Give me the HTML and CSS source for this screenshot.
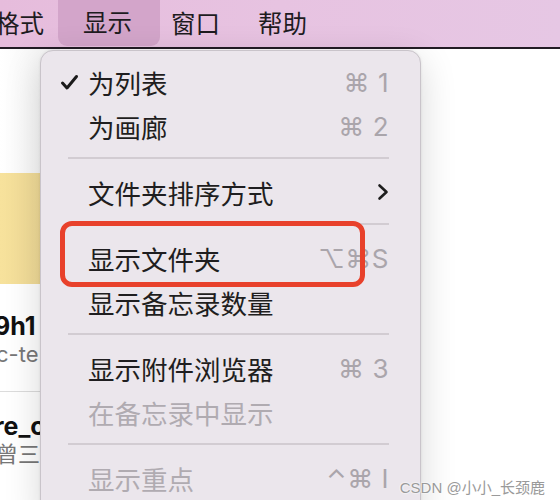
FILE: index.html
```html
<!DOCTYPE html>
<html lang="zh-CN">
<head>
    <meta charset="UTF-8">
    <meta name="viewport" content="width=device-width, initial-scale=1.0">
    <title>显示菜单</title>
    <link rel="stylesheet" href="styles.css">
</head>
<body>
    <div class="menubar">
        <span class="bar-item cut">格式</span>
        <span class="bar-item active">显示</span>
        <span class="bar-item">窗口</span>
        <span class="bar-item">帮助</span>
    </div>
    <div class="window">
        <div class="notes">
            <div class="note-top"></div>
            <div class="note-current"></div>
            <div class="note">
                <div class="note-title">9h1</div>
                <div class="note-sub">c-te</div>
            </div>
            <div class="note">
                <div class="note-title">re_c</div>
                <div class="note-sub">曾三.</div>
            </div>
        </div>
        <div class="editor"></div>

        <div class="menu">
            <div class="menu-item">
                <span class="check"><svg width="19" height="17" viewBox="0 0 19 17"><path d="M2.5 9 L7 14 L16.5 2.5" fill="none" stroke="#1b1b1b" stroke-width="3" stroke-linecap="round" stroke-linejoin="round"/></svg></span>
                <span class="label">为列表</span><span class="keys">⌘ 1</span>
            </div>
            <div class="menu-item"><span class="check"></span><span class="label">为画廊</span><span class="keys">⌘ 2</span></div>
            <div class="sep"></div>
            <div class="menu-item"><span class="check"></span><span class="label">文件夹排序方式</span>
                <svg class="chevron" width="12" height="18" viewBox="0 0 12 18"><path d="M2.5 2.5 L9.5 9 L2.5 15.5" fill="none" stroke="#1e1e1e" stroke-width="2.6" stroke-linecap="round" stroke-linejoin="round"/></svg>
            </div>
            <div class="sep"></div>
            <div class="menu-item"><span class="check"></span><span class="label">显示文件夹</span><span class="keys">⌥⌘S</span></div>
            <div class="menu-item"><span class="check"></span><span class="label">显示备忘录数量</span></div>
            <div class="sep"></div>
            <div class="menu-item"><span class="check"></span><span class="label">显示附件浏览器</span><span class="keys">⌘ 3</span></div>
            <div class="menu-item disabled"><span class="check"></span><span class="label">在备忘录中显示</span></div>
            <div class="sep"></div>
            <div class="menu-item disabled"><span class="check"></span><span class="label">显示重点</span><span class="keys">⌃⌘ I</span></div>

            <div class="mark"></div>
        </div>

        <div class="watermark">CSDN @小小_长颈鹿</div>
    </div>
</body>
</html>
```

FILE: styles.css
```css
* {
    box-sizing: border-box;
}
html, body {
    margin: 0;
    padding: 0;
    width: 560px;
    height: 500px;
    overflow: hidden;
    background: #fff;
    font-family: "Noto Sans CJK SC", "Noto Sans", sans-serif;
}

/* 顶部菜单栏 */
.menubar {
    height: 49px;
    display: flex;
    align-items: stretch;
    background: linear-gradient(90deg, #e6bcdc 0%, #e7c3e1 50%, #e6c7e4 100%);
    border-bottom: 2px solid #221c24;
    font-size: 24.5px;
    color: #1e1c1f;
}
.bar-item {
    display: flex;
    align-items: center;
    padding: 0 19px 3px;
}
.bar-item.cut {
    margin-left: -5px;
    padding-left: 0;
}
.bar-item.active {
    background: #d3a5ca;
    border-radius: 0 0 9px 9px;
    padding: 0 28px 3px 25px;
    margin: 0 -8px 1px -5px;
}

/* 背后的窗口 */
.window {
    position: relative;
    height: 451px;
    display: flex;
}
.notes {
    width: 60px;
    display: flex;
    flex-direction: column;
}
.note-top {
    height: 124px;
    background: linear-gradient(90deg, #fff 0%, #f3f3f3 100%);
}
.note-current {
    height: 111px;
    background: linear-gradient(90deg, #f7e29c 0%, #f2dc98 60%, #e6d193 100%);
}
.note {
    height: 108px;
    padding: 28px 0 0 0;
    white-space: nowrap;
    overflow: hidden;
    border-bottom: 1px solid #dcdcdc;
    margin-right: -20px;
}
.note + .note {
    border-bottom: none;
    padding-top: 20px;
}
.note-title {
    font-family: "Inter", "Noto Sans CJK SC", sans-serif;
    font-weight: 700;
    font-size: 25px;
    line-height: 28px;
    color: #111;
    margin-left: -6px;
}
.note-sub {
    font-family: "Inter", "Noto Sans CJK SC", sans-serif;
    font-size: 22px;
    line-height: 28px;
    color: #777;
    margin-left: -4px;
}
.editor {
    flex: 1;
    background: #fff;
}

/* 下拉菜单 */
.menu {
    position: absolute;
    left: 40px;
    top: 1px;
    width: 381px;
    height: 470px;
    padding: 9px 31px 0 19px;
    background: #ebe6ec;
    border: 1px solid #c9c4ca;
    border-radius: 13px;
    box-shadow: 0 10px 36px rgba(0, 0, 0, 0.16), 0 0 3px rgba(0, 0, 0, 0.08);
}
.menu-item {
    height: 44px;
    display: flex;
    align-items: center;
    font-size: 26.5px;
    color: #1f1e20;
}
.menu-item.disabled {
    color: #b0abb1;
}
.check {
    width: 28px;
    display: flex;
    align-items: center;
}
.label {
    flex: 1;
}
.keys {
    font-family: "Inter", "DejaVu Sans", sans-serif;
    font-size: 26px;
    color: #aaa5ab;
    letter-spacing: 0.5px;
}
.chevron {
    margin-right: 0;
}
.sep {
    height: 2px;
    margin: 9px 0 11px 8px;
    background: #d2ccd2;
}

/* 红色标注框 */
.mark {
    position: absolute;
    left: 19px;
    top: 170px;
    width: 305px;
    height: 66px;
    border: 5px solid #e8412b;
    border-radius: 12px;
}

.watermark {
    position: absolute;
    right: 15px;
    bottom: 3px;
    font-family: "Liberation Sans", "Noto Sans CJK SC", sans-serif;
    font-size: 15px;
    color: #9a9a9a;
    text-shadow: 0 0 2px #fff, 0 0 2px #fff;
}
```
